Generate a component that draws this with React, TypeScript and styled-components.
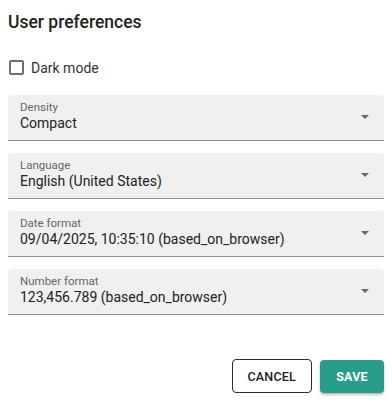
import React from "react";
import styled, { createGlobalStyle } from "styled-components";

const Global = createGlobalStyle`
  html, body { margin: 0; padding: 0; background: #ffffff; }
  body { font-family: Roboto, "Liberation Sans", sans-serif; color: rgba(0,0,0,0.87); }
  * { box-sizing: border-box; }
`;

const Dialog = styled.div`
  width: 392px;
  height: 401px;
  padding: 8px;
  display: flex;
  flex-direction: column;
`;

const Title = styled.h2`
  margin: 0;
  height: 28px;
  line-height: 28px;
  font-size: 17.5px;
  font-weight: 500;
  color: #222;
`;

const CheckRow = styled.label`
  margin-top: 21px;
  height: 22px;
  display: flex;
  align-items: center;
  gap: 7px;
  font-size: 14px;
  color: #333;
`;

const Box = styled.span`
  width: 15px;
  height: 15px;
  margin-left: 1px;
  margin-top: -1px;
  border: 2px solid #6e6e6e;
  border-radius: 2px;
`;

const Fields = styled.div`
  margin-top: 16px;
  display: flex;
  flex-direction: column;
  gap: 12px;
`;

const Field = styled.div`
  height: 46px;
  background: #f0f0f0;
  border-radius: 4px 4px 0 0;
  border-bottom: 1px solid #8f8f8f;
  padding: 5px 15px 0 12px;
  display: flex;
  align-items: flex-start;
`;

const FieldText = styled.div`
  flex: 1;
  display: flex;
  flex-direction: column;
`;

const Label = styled.span`
  font-size: 11.5px;
  line-height: 14px;
  color: #666;
`;

const Value = styled.span`
  font-size: 14px;
  line-height: 18px;
  color: #222;
`;

const Arrow = styled.svg`
  width: 8px;
  height: 4px;
  fill: #666;
  align-self: center;
  margin-top: -7px;
`;

const Actions = styled.div`
  margin-top: 44px;
  display: flex;
  justify-content: flex-end;
  align-items: flex-start;
  gap: 8px;
`;

const Button = styled.button<{ $primary?: boolean }>`
  height: ${(p) => (p.$primary ? "33px" : "34px")};
  margin-top: ${(p) => (p.$primary ? "1px" : "0")};
  min-width: ${(p) => (p.$primary ? "64px" : "80px")};
  padding: 0 15px;
  border-radius: 4px;
  font-family: Roboto, "Liberation Sans", sans-serif;
  font-size: 12.5px;
  font-weight: ${(p) => (p.$primary ? 700 : 500)};
  text-transform: uppercase;
  letter-spacing: 0.2px;
  cursor: pointer;
  border: ${(p) => (p.$primary ? "none" : "1px solid #2a2a2a")};
  background: ${(p) => (p.$primary ? "#2a9d88" : "#ffffff")};
  color: ${(p) => (p.$primary ? "#ffffff" : "#222")};
  box-shadow: ${(p) =>
    p.$primary
      ? "0 2px 3px rgba(0,0,0,0.2), 0 1px 2px rgba(0,0,0,0.12)"
      : "none"};
`;

const fields = [
  { label: "Density", value: "Compact" },
  { label: "Language", value: "English (United States)" },
  { label: "Date format", value: "09/04/2025, 10:35:10 (based_on_browser)" },
  { label: "Number format", value: "123,456.789 (based_on_browser)" },
];

export default function App() {
  return (
    <>
      <Global />
      <Dialog>
        <Title>User preferences</Title>
        <CheckRow>
          <Box />
          Dark mode
        </CheckRow>
        <Fields>
          {fields.map((f) => (
            <Field key={f.label}>
              <FieldText>
                <Label>{f.label}</Label>
                <Value>{f.value}</Value>
              </FieldText>
              <Arrow viewBox="0 0 10 5">
                <path d="M0 0l5 5 5-5z" />
              </Arrow>
            </Field>
          ))}
        </Fields>
        <Actions>
          <Button>Cancel</Button>
          <Button $primary>Save</Button>
        </Actions>
      </Dialog>
    </>
  );
}
